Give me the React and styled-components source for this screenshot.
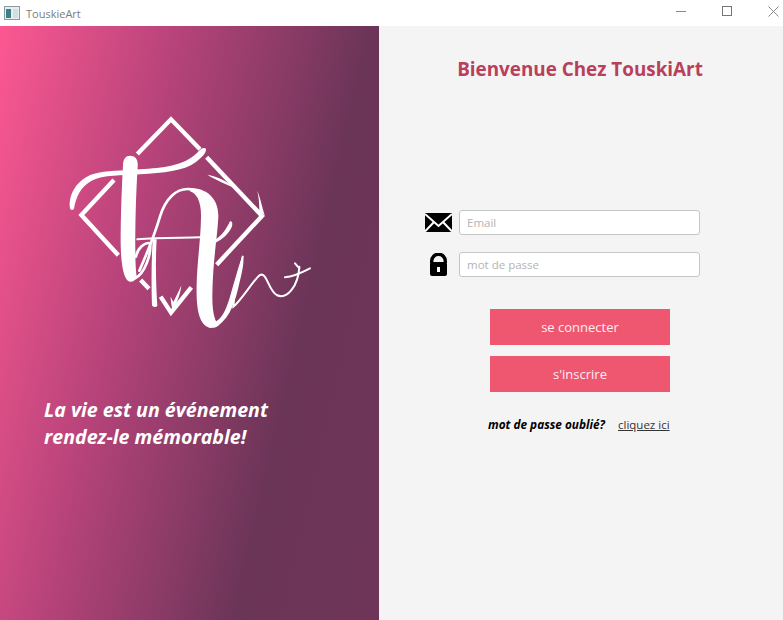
import React from 'react'
import styled, { createGlobalStyle } from 'styled-components'

const Global = createGlobalStyle`
  html, body { margin: 0; padding: 0; height: 100%; overflow: hidden; }
  body { font-family: "Open Sans", "Noto Sans", sans-serif; background: #f4f4f4; }
`

const Page = styled.div`
  width: 783px;
  height: 620px;
  display: flex;
  flex-direction: column;
`

const TitleBar = styled.div`
  height: 26px;
  background: #fff;
  display: flex;
  align-items: center;
  padding-left: 4px;
`
const AppName = styled.span`
  margin-left: 6px;
  font-size: 11px;
  color: #7d7d7d;
  flex: 1;
`
const Controls = styled.div`
  display: flex;
  gap: 26px;
  height: 100%;
`
const Control = styled.div`
  width: 20px;
  display: flex;
  align-items: center;
  justify-content: center;
  margin-top: -4px;
`

const Body = styled.div`
  flex: 1;
  display: flex;
`

const Left = styled.div`
  width: 379px;
  background: linear-gradient(103deg, #fc5891 0%, #b6437a 35%, #6b3558 72%, #6f3559 100%);
  display: flex;
  flex-direction: column;
`
const LogoWrap = styled.div`
  padding: 74px 0 0 50px;
  height: 240px;
`
const Tagline = styled.div`
  margin: 56px 0 0 44px;
  color: #fff;
  font-size: 19.6px;
  line-height: 27px;
  font-weight: 700;
  font-style: italic;
`

const Right = styled.div`
  flex: 1;
  background: #f4f4f4;
  display: flex;
  flex-direction: column;
  align-items: center;
`
const Title = styled.h1`
  margin: 29px 2px 0 0;
  font-size: 18.85px;
  line-height: 28px;
  font-weight: 700;
  color: #b93f5b;
`
const Form = styled.div`
  margin: 127px 37px 0 0;
  display: flex;
  flex-direction: column;
  gap: 17px;
`
const Row = styled.div`
  display: flex;
  align-items: center;
  gap: 7px;
`
const IconBox = styled.div`
  width: 27px;
  height: 25px;
  display: flex;
  align-items: center;
  justify-content: center;
`
const Input = styled.input`
  width: 241px;
  height: 25px;
  box-sizing: border-box;
  border: 1px solid #c6c6c6;
  border-radius: 3px;
  background: #fff;
  padding: 0 7px;
  font-family: inherit;
  font-size: 11.5px;
  outline: none;
  &::placeholder { color: #b4b4b4; opacity: 1; }
`
const Buttons = styled.div`
  margin: 32px 2px 0 0;
  display: flex;
  flex-direction: column;
  gap: 11px;
`
const Button = styled.button`
  width: 180px;
  height: 36px;
  border: none;
  background: #ef5670;
  color: #fdeef0;
  font-family: inherit;
  font-size: 13px;
  padding: 0;
`
const Forgot = styled.div`
  margin: 24px 0 0 109px;
  display: flex;
  align-items: center;
  gap: 13px;
  align-self: flex-start;
`
const ForgotText = styled.span`
  font-size: 11.8px;
  font-weight: 700;
  font-style: italic;
  color: #000;
`
const ForgotLink = styled.a`
  font-size: 11.5px;
  color: #333;
  text-decoration: underline;
`

const Logo = () => (
  <svg width="280" height="240" viewBox="0 0 840 720">
    <g fill="none" stroke="#fff" strokeWidth="13" strokeLinecap="butt">
      <path d="M262 162 L363 58 L450 148" />
      <path d="M192 240 L94 345 L205 466" />
      <path d="M272 540 L297 566" />
      <path d="M332 590 L363 638 L424 562" />
      <path d="M500 494 L636 348 L470 172" />
    </g>
    <g fill="#fff">
      {/* t stem */}
      <path d="M240 167 C256 167 265 178 263 200 C259 270 256 340 256 450 C256 490 258 515 260 530 C255 542 248 546 240 545 C218 542 211 480 212 400 C213 320 216 250 219 195 C220 175 228 167 240 167 Z" />
      {/* swash */}
      <path d="M60 325 C54 285 80 238 130 222 C170 210 215 214 270 208 C340 204 400 198 440 160 C450 146 462 140 468 146 C470 160 452 174 438 186 C400 214 340 218 270 223 C215 227 160 224 125 242 C92 260 78 290 72 326 C68 331 62 331 60 325 Z" />
      {/* A main */}
      <path d="M420 264 C470 264 506 295 505 350 C502 410 492 460 488 550 C486 600 486 640 500 668 C490 684 482 684 475 682 C445 670 438 620 440 550 C442 480 452 420 453 350 C454 305 440 280 420 274 Z" />
      {/* A right flick */}
      <path d="M497 418 C515 408 530 385 540 364 C547 362 549 372 545 382 C535 402 518 418 497 428 Z" />
      {/* thin stem */}
      <path d="M308 418 L320 418 C316 480 318 560 322 618 C318 622 308 622 306 616 C304 560 304 480 308 418 Z" />
      {/* arrow spike */}
      <path d="M394 556 C392 580 382 605 368 632 C364 615 362 600 362 590 L370 606 C378 590 388 572 394 556 Z" />
      {/* right corner spike */}
      <path d="M622 272 C630 290 636 320 644 346 L628 332 C628 310 626 290 622 272 Z" />
      <path d="M472 224 C500 230 530 240 552 264 C530 252 500 242 472 224 Z" />
      {/* tail */}
      <path d="M490 668 C515 660 530 625 540 590 C552 550 565 500 578 466 C584 480 578 510 568 550 C557 600 542 650 505 677 C495 684 485 685 475 682 Z" />
    </g>
    <g fill="none" stroke="#fff" strokeLinecap="round">
      {/* A left arc, crossbar, t bowl */}
      <path strokeWidth="8" d="M425 268 C378 260 345 300 330 350 C318 390 300 440 268 512" />
      <path strokeWidth="6" d="M262 418 C330 413 400 414 452 412" />
      <path strokeWidth="8" d="M255 535 C285 520 305 460 300 430 C285 425 262 445 258 470" />
      {/* tail line */}
      <path strokeWidth="6" d="M578 470 C568 520 552 570 550 620 C575 600 610 540 630 525 C650 515 655 570 680 585 C710 600 745 560 748 500" />
      <path strokeWidth="6" d="M735 490 L748 505" />
      <path strokeWidth="6" d="M705 532 C725 530 755 518 780 505" />
    </g>
  </svg>
)

const MailIcon = () => (
  <svg width="27" height="19" viewBox="0 0 27 19">
    <rect width="27" height="19" fill="#000" />
    <path d="M0 1 L13.5 13 L27 1 M0 18.5 L9 9 M27 18.5 L18 9" fill="none" stroke="#fff" strokeWidth="2" />
  </svg>
)

const LockIcon = () => (
  <svg width="17" height="23" viewBox="0 0 17 23">
    <path d="M1.7 10 V8 A6.8 6.8 0 0 1 15.3 8 V10" fill="none" stroke="#000" strokeWidth="3.4" />
    <rect x="0" y="9" width="17" height="14" rx="2" fill="#000" />
    <rect x="7" y="14" width="3" height="5" fill="#fff" />
  </svg>
)

const WindowIcon = () => (
  <svg width="16" height="14" viewBox="0 0 16 14">
    <rect x="0.5" y="0.5" width="15" height="13" fill="#e8eef0" stroke="#8a9aa0" />
    <rect x="2" y="3" width="5" height="9" fill="#3e7f86" />
    <rect x="9" y="3" width="5" height="9" fill="#cfdfe2" />
  </svg>
)

export default function App() {
  return (
    <Page>
      <Global />
      <TitleBar>
        <WindowIcon />
        <AppName>TouskieArt</AppName>
        <Controls>
          <Control>
            <svg width="10" height="10"><path d="M0 5.5 H10" stroke="#888" /></svg>
          </Control>
          <Control>
            <svg width="10" height="10"><rect x="0.5" y="0.5" width="9" height="9" fill="none" stroke="#777" /></svg>
          </Control>
          <Control>
            <svg width="11" height="11"><path d="M0.5 0.5 L10.5 10.5 M10.5 0.5 L0.5 10.5" stroke="#888" /></svg>
          </Control>
        </Controls>
      </TitleBar>
      <Body>
        <Left>
          <LogoWrap><Logo /></LogoWrap>
          <Tagline>La vie est un événement<br />rendez-le mémorable!</Tagline>
        </Left>
        <Right>
          <Title>Bienvenue Chez TouskiArt</Title>
          <Form>
            <Row>
              <IconBox><MailIcon /></IconBox>
              <Input placeholder="Email" />
            </Row>
            <Row>
              <IconBox><LockIcon /></IconBox>
              <Input placeholder="mot de passe" />
            </Row>
          </Form>
          <Buttons>
            <Button>se connecter</Button>
            <Button>s'inscrire</Button>
          </Buttons>
          <Forgot>
            <ForgotText>mot de passe oublié?</ForgotText>
            <ForgotLink>cliquez ici</ForgotLink>
          </Forgot>
        </Right>
      </Body>
    </Page>
  )
}
